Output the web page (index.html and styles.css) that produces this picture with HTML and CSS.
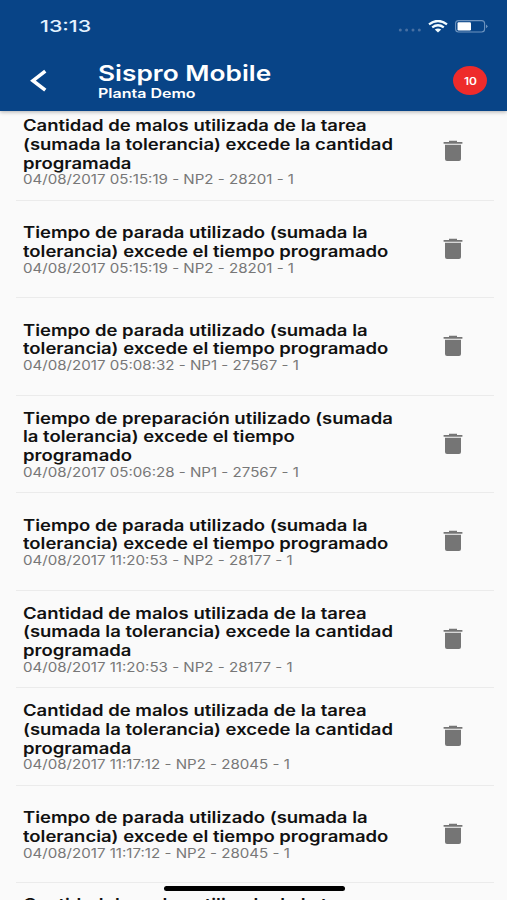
FILE: index.html
```
<!DOCTYPE html>
<html lang="es">
<head>
<meta charset="utf-8">
<title>Sispro Mobile</title>
<link rel="stylesheet" href="styles.css">
</head>
<body>
<svg class="defs" width="0" height="0"><symbol id="trash" viewBox="0 0 20 22"><path d="M6 0.8h8v1.1h5.4v1.9H0.6V1.9H6z"/><path d="M2 4.8h16v14.2a2 2 0 0 1-2 2H4a2 2 0 0 1-2-2z"/></symbol></svg>
<div class="screen">
<header class="header">
<div class="status">
<span class="clock">13:13</span>
<div class="indicators">
<svg class="dots" width="24" height="4" viewBox="0 0 24 4"><circle cx="2.3" cy="2" r="1.5"/><circle cx="8.6" cy="2" r="1.5"/><circle cx="15" cy="2" r="1.5"/><circle cx="21.3" cy="2" r="1.5"/></svg>
<svg class="wifi" width="20" height="13" viewBox="0 0 20 13"><path d="M1 4.3Q10-2.4 19 4.3M4.2 7.4Q10 3 15.8 7.4"/><path class="fan" d="M6.8 9.6Q10 7.2 13.2 9.6L10 12.5z"/></svg>
<svg class="battery" width="33" height="13" viewBox="0 0 33 13"><rect class="shell" x=".6" y=".6" width="29" height="11.4" rx="3"/><rect class="charge" x="2.5" y="2.2" width="13.5" height="8.2" rx="1.2"/><path class="tip" d="M31 4.5q3 1.8 0 3.8z"/></svg>
</div>
</div>
<div class="toolbar">
<svg class="back" width="18" height="24" viewBox="0 0 18 24"><path d="M16.3 2.2L4 11.7l12.3 9.5"/></svg>
<div class="titles"><h1>Sispro Mobile</h1><p>Planta Demo</p></div>
<div class="badge"><span>10</span></div>
</div>
</header>
<main class="list">
<article class="row"><div class="text"><h2>Cantidad de malos utilizada de la tarea<br>(sumada la tolerancia) excede la cantidad<br>programada</h2><p>04/08/2017 05:15:19 - NP2 - 28201 - 1</p></div><svg class="trash"><use href="#trash"/></svg></article>
<article class="row"><div class="text"><h2>Tiempo de parada utilizado (sumada la<br>tolerancia) excede el tiempo programado</h2><p>04/08/2017 05:15:19 - NP2 - 28201 - 1</p></div><svg class="trash"><use href="#trash"/></svg></article>
<article class="row"><div class="text"><h2>Tiempo de parada utilizado (sumada la<br>tolerancia) excede el tiempo programado</h2><p>04/08/2017 05:08:32 - NP1 - 27567 - 1</p></div><svg class="trash"><use href="#trash"/></svg></article>
<article class="row"><div class="text"><h2>Tiempo de preparación utilizado (sumada<br>la tolerancia) excede el tiempo<br>programado</h2><p>04/08/2017 05:06:28 - NP1 - 27567 - 1</p></div><svg class="trash"><use href="#trash"/></svg></article>
<article class="row"><div class="text"><h2>Tiempo de parada utilizado (sumada la<br>tolerancia) excede el tiempo programado</h2><p>04/08/2017 11:20:53 - NP2 - 28177 - 1</p></div><svg class="trash"><use href="#trash"/></svg></article>
<article class="row"><div class="text"><h2>Cantidad de malos utilizada de la tarea<br>(sumada la tolerancia) excede la cantidad<br>programada</h2><p>04/08/2017 11:20:53 - NP2 - 28177 - 1</p></div><svg class="trash"><use href="#trash"/></svg></article>
<article class="row"><div class="text"><h2>Cantidad de malos utilizada de la tarea<br>(sumada la tolerancia) excede la cantidad<br>programada</h2><p>04/08/2017 11:17:12 - NP2 - 28045 - 1</p></div><svg class="trash"><use href="#trash"/></svg></article>
<article class="row"><div class="text"><h2>Tiempo de parada utilizado (sumada la<br>tolerancia) excede el tiempo programado</h2><p>04/08/2017 11:17:12 - NP2 - 28045 - 1</p></div><svg class="trash"><use href="#trash"/></svg></article>
<article class="row"><div class="text"><h2>Cantidad de malos utilizada de la tarea</h2></div></article>
</main>
<div class="home-bar"></div>
</div>
</body>
</html>
```

FILE: styles.css
```
* { box-sizing: border-box; }
body { margin: 0; font-family: Inter, "Liberation Sans", sans-serif; background: #fafafa; }
h1, h2, p { margin: 0; white-space: nowrap; transform-origin: 0 50%; }
svg { display: block; flex: none; }
.defs { position: absolute; }
.screen { position: relative; height: 900px; overflow: hidden; }
.header { position: relative; z-index: 1; height: 111px; background: #084487; color: #fff; box-shadow: 0 1px 4px rgba(0, 0, 0, .3); }
.status { height: 52px; display: flex; justify-content: space-between; padding: 0 19.5px 0 40px; align-items: center; }
.clock { font-size: 16.5px; font-weight: 500; color: #e3f2ff; transform: scaleX(1.3); transform-origin: 0 50%; }
.indicators { display: flex; align-items: center; }
.dots { fill: #4770a3; margin: 8px 6px 0 0; }
.wifi { fill: none; stroke: #f2fcff; stroke-width: 2.3; margin-right: 7px; }
.wifi .fan { fill: #f2fcff; stroke: none; }
.shell { fill: none; stroke: #6e94bf; stroke-width: 1.1; }
.charge { fill: #fff; }
.tip { fill: #6e94bf; }
.toolbar { height: 59px; display: flex; align-items: center; padding: 0 20px 2px 29px; }
.back { fill: none; stroke: #fff; stroke-width: 3.6; }
.titles { margin-left: 51px; flex: 1; padding-top: 2px; }
h1 { font-size: 21.5px; line-height: 24px; font-weight: 600; transform: scaleX(1.222); }
.titles p { font-size: 12.8px; line-height: 17px; font-weight: 600; transform: scaleX(1.25); }
.badge { width: 34px; height: 29px; border-radius: 50%; background: #ee2b2b; display: flex; align-items: center; justify-content: center; font-size: 10px; font-weight: 600; }
.badge span { transform: scaleX(1.2); }
.list { margin-top: -8px; }
.row { height: 97.5px; margin: 0 13px 0 16px; padding: 0 31px 0 6.5px; border-bottom: 1px solid #ebebeb; display: flex; align-items: center; justify-content: space-between; }
.row:last-child { border: 0; align-items: flex-start; padding-top: 10px; }
.text { padding-top: 3px; }
h2 { font-size: 15.4px; line-height: 18.75px; font-weight: 600; color: #111; transform: scaleX(1.2); }
.text p { font-size: 12.7px; line-height: 13px; margin-bottom: 2px; color: #777; transform: scaleX(1.19); }
.trash { width: 20px; height: 22px; fill: #757575; }
.home-bar { position: absolute; z-index: 2; left: 164px; top: 886px; width: 181px; height: 5px; border-radius: 3px; background: #000; }
```
